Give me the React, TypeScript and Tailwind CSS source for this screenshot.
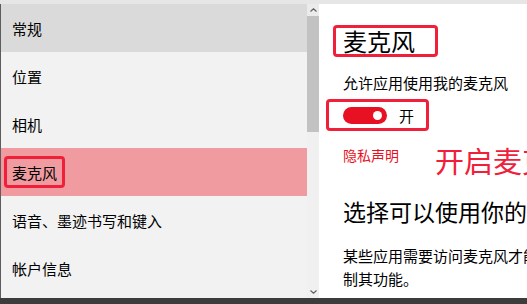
import React from "react";

const navItems = ["常规", "位置", "相机", "麦克风", "语音、墨迹书写和键入", "帐户信息"];

const font = { fontFamily: '"Noto Sans CJK SC", "Noto Sans", sans-serif' };

export default function App() {
  return (
    <div className="w-[527px] h-[304px] flex flex-col overflow-hidden bg-white" style={font}>
      <div className="h-[4px] bg-[#e6e6e6]" />
      <div className="flex flex-1 min-h-0">
        <div className="w-[1px] bg-[#5c5c5c]" />
        {/* nav list */}
        <div className="w-[306px] bg-[#f2f2f2] flex flex-col">
          {navItems.map((item, i) => (
            <div
              key={item}
              className={
                "h-[48px] flex items-center text-[15px] text-black " +
                (i === 0 ? "bg-[#dadada] pl-[11px]" : i === 3 ? "bg-[#f09ba0] pl-[3px]" : "pl-[11px]")
              }
            >
              {i === 3 ? (
                <span className="border-[3px] border-[#f0203a] rounded-[4px] h-[32px] px-[5px] flex items-center leading-none">
                  {item}
                </span>
              ) : (
                <span className="leading-none">{item}</span>
              )}
            </div>
          ))}
        </div>
        {/* scrollbar */}
        <div className="w-[12px] bg-[#f0f0f0] flex flex-col items-center">
          <div className="h-[12px] w-full flex items-center justify-center bg-[#ebebeb]">
            <svg width="7" height="4" viewBox="0 0 7 4">
              <path d="M0.5 3.5 L3.5 0.8 L6.5 3.5" fill="none" stroke="#606060" strokeWidth="1.2" />
            </svg>
          </div>
          <div className="h-[116px] w-full bg-[#c2c2c2]" />
          <div className="flex-1" />
          <div className="h-[12px] w-full flex items-center justify-center">
            <svg width="7" height="4" viewBox="0 0 7 4">
              <path d="M0.5 0.5 L3.5 3.2 L6.5 0.5" fill="none" stroke="#606060" strokeWidth="1.2" />
            </svg>
          </div>
        </div>
        {/* content */}
        <div className="flex-1 pl-[24px] pt-[21px] flex flex-col whitespace-nowrap overflow-hidden">
          <div className="-ml-[10px] w-[105px] h-[32px] border-[3px] border-[#f0203a] rounded-[4px] flex items-center pl-[7px]">
            <span className="text-[24px] leading-none text-black">麦克风</span>
          </div>
          <div className="mt-[18px] text-[15px] leading-none text-black">允许应用使用我的麦克风</div>
          <div className="-ml-[17px] mt-[9px] w-[103px] h-[32px] border-[3px] border-[#f0203a] rounded-[4px] flex items-center pl-[14px]">
            <div className="w-[44px] h-[17px] rounded-full bg-[#e81123] flex items-center justify-end pr-[5px]">
              <div className="w-[9px] h-[9px] rounded-full bg-white" />
            </div>
            <span className="ml-[12px] text-[15px] leading-none text-black">开</span>
          </div>
          <div className="flex items-start mt-[15px]">
            <span className="text-[14px] leading-none text-[#e81123] mt-[2px]">隐私声明</span>
            <span className="ml-[36px] text-[29px] leading-none text-[#f0203a]">开启麦克风</span>
          </div>
          <div className="mt-[25px] text-[23px] leading-none text-black">选择可以使用你的麦克风的应用</div>
          <div className="mt-[21px] text-[15px] leading-[23px] text-black">
            某些应用需要访问麦克风才能按预期工作。在此处关闭应用将限
            <br />
            制其功能。
          </div>
        </div>
      </div>
      <div className="h-[6px] bg-[#3c3c3c]" />
    </div>
  );
}
